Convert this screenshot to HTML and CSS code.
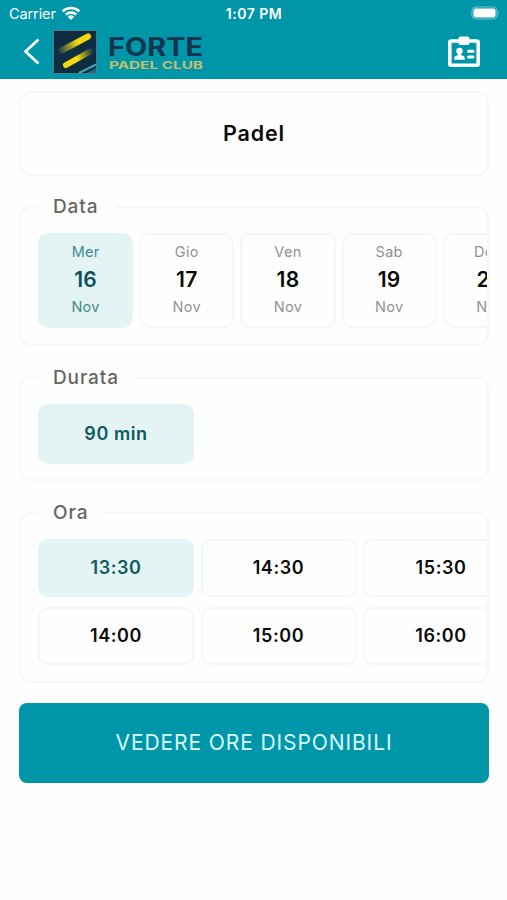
FILE: index.html
```html
<!DOCTYPE html>
<html lang="it">
<head>
    <meta charset="UTF-8">
    <meta name="viewport" content="width=device-width, initial-scale=1.0">
    <title>Forte Padel Club</title>
    <link rel="stylesheet" href="styles.css">
</head>
<body>
    <header class="header">
        <div class="status-bar">
            <div class="carrier">
                <span class="carrier-name">Carrier</span>
                <svg class="wifi" width="20" height="15" viewBox="0 0 20 15">
                    <path d="M1.7 5.4a12 12 0 0 1 16.6 0M4.8 8.7a7.5 7.5 0 0 1 10.4 0" fill="none" stroke="#fff" stroke-width="2.5"/>
                    <path d="M6.8 10.7a4.7 4.7 0 0 1 6.4 0L10 14z" fill="#fff"/>
                </svg>
            </div>
            <div class="time">1:07 PM</div>
            <svg class="battery" width="31" height="15" viewBox="0 0 31 15">
                <rect x="2" y="1" width="25" height="12" rx="4" fill="none" stroke="#6fc3cc" stroke-width="1.2"/>
                <rect x="3.5" y="2.5" width="22" height="9" rx="2" fill="#fff"/>
                <path d="M28.5 5q1.8 2 0 4z" fill="#6fc3cc"/>
            </svg>
        </div>
        <div class="nav-bar">
            <svg class="back" width="18" height="28" viewBox="0 0 18 28">
                <path d="M16.5 1.5L3.5 13.5l13 12" fill="none" stroke="#fff" stroke-width="2.7"/>
            </svg>
            <svg class="logo" width="44" height="44" viewBox="0 0 44 44">
                <defs>
                    <linearGradient id="stripeTop" gradientUnits="userSpaceOnUse" x1="5" y1="22" x2="24" y2="12">
                        <stop offset="0" stop-color="#12324a"/>
                        <stop offset="1" stop-color="#f5d90f"/>
                    </linearGradient>
                    <linearGradient id="stripeBottom" gradientUnits="userSpaceOnUse" x1="40" y1="20" x2="24" y2="28">
                        <stop offset="0" stop-color="#12324a"/>
                        <stop offset="1" stop-color="#f5d90f"/>
                    </linearGradient>
                </defs>
                <rect x=".5" y=".5" width="43" height="43" fill="#0e2d43" stroke="#4b7d8b"/>
                <path d="M6 22L35 6.5" stroke="url(#stripeTop)" stroke-width="6" stroke-linecap="round"/>
                <path d="M13 35L39 20.5" stroke="url(#stripeBottom)" stroke-width="6" stroke-linecap="round"/>
                <path d="M26 43L43 34.5" stroke="#49a6b8" stroke-width="2"/>
                <path d="M34 43l9-5v5z" fill="#12708a"/>
            </svg>
            <div class="brand">
                <svg width="98" height="38" viewBox="0 0 98 38">
                    <text class="brand-name" x="1" y="22.5" textLength="95" lengthAdjust="spacingAndGlyphs">FORTE</text>
                    <text class="brand-sub" x="2" y="36" textLength="94" lengthAdjust="spacingAndGlyphs">PADEL CLUB</text>
                </svg>
            </div>
            <svg class="badge" width="34" height="32" viewBox="0 0 34 32">
                <rect x="2.8" y="5" width="28.4" height="24.2" rx="1.5" fill="none" stroke="#fff" stroke-width="3.6"/>
                <rect x="11.5" y="0.5" width="11" height="8.5" rx="2" fill="#fff"/>
                <circle cx="12.5" cy="15" r="3.2" fill="#fff"/>
                <path d="M11 16h3v3l3 1.2q.8.5.8 3.5H7.2q0-3 .8-3.5l3-1.2z" fill="#fff"/>
                <path d="M21.5 15.2h4.5M21.5 21h4.5" stroke="#fff" stroke-width="3" stroke-linecap="round"/>
            </svg>
        </div>
    </header>

    <main class="container">
        <div class="sport">Padel</div>

        <fieldset class="group">
            <legend>Data</legend>
            <div class="scroller">
                <div class="days">
                    <div class="day selected"><span>Mer</span><b>16</b><span>Nov</span></div>
                    <div class="day"><span>Gio</span><b>17</b><span>Nov</span></div>
                    <div class="day"><span>Ven</span><b>18</b><span>Nov</span></div>
                    <div class="day"><span>Sab</span><b>19</b><span>Nov</span></div>
                    <div class="day"><span>Dom</span><b>20</b><span>Nov</span></div>
                </div>
            </div>
        </fieldset>

        <fieldset class="group group-duration">
            <legend>Durata</legend>
            <div class="slot duration selected">90 min</div>
        </fieldset>

        <fieldset class="group">
            <legend>Ora</legend>
            <div class="scroller">
                <div class="hours">
                    <div class="slot selected">13:30</div>
                    <div class="slot">14:30</div>
                    <div class="slot">15:30</div>
                    <div class="slot">14:00</div>
                    <div class="slot">15:00</div>
                    <div class="slot">16:00</div>
                </div>
            </div>
        </fieldset>

        <button class="submit">VEDERE ORE DISPONIBILI</button>
    </main>
</body>
</html>
```
FILE: styles.css
```css
* {
    box-sizing: border-box;
}
body {
    margin: 0;
    font-family: Inter, "Liberation Sans", sans-serif;
    background-color: #fefefe;
    color: #0b0b0b;
}
.header {
    height: 79px;
    background-color: #0096a9;
    color: white;
}
.status-bar {
    display: grid;
    grid-template-columns: 1fr auto 1fr;
    align-items: center;
    height: 27px;
    padding: 0 6px 0 9px;
    font-size: 14.5px;
}
.carrier {
    display: flex;
    align-items: center;
    gap: 5px;
}
.carrier-name {
    letter-spacing: -0.1px;
}
.time {
    padding-right: 2px;
    font-weight: 600;
    font-size: 14px;
    letter-spacing: 0.5px;
}
.battery {
    justify-self: end;
}
.nav-bar {
    display: flex;
    align-items: center;
    height: 50px;
    padding: 0 26px 0 22px;
}
.logo {
    margin-left: 13px;
}
.brand {
    height: 38px;
    margin-left: 10px;
}
.brand-name {
    font-size: 25px;
    font-weight: 700;
    fill: #12364d;
}
.brand-sub {
    font-size: 11px;
    font-weight: 700;
    fill: #c3bd6c;
}
.badge {
    margin-left: auto;
}
.container {
    padding: 12px 18px 0 19px;
}
.sport {
    height: 85px;
    margin-bottom: 19px;
    border: 2px solid #f6f7f7;
    border-radius: 12px;
    font-size: 21.5px;
    font-weight: 600;
    line-height: 81px;
    letter-spacing: 0.8px;
    text-align: center;
}
.group {
    min-width: 0;
    margin: 0 0 20px;
    padding: 14px 0 16px 17px;
    border: 2px solid #f6f7f7;
    border-radius: 12px;
}
.group-duration {
    padding-bottom: 15px;
}
legend {
    height: 24px;
    padding: 0 17px 0 15px;
    font-size: 19px;
    font-weight: 500;
    line-height: 24px;
    letter-spacing: 0.9px;
    color: #666;
}
.scroller {
    overflow: hidden;
}
.days {
    display: flex;
    gap: 6px;
}
.day {
    display: flex;
    flex: 0 0 95.2px;
    flex-direction: column;
    align-items: center;
    height: 95px;
    padding-top: 7px;
    border: 2px solid #f5f6f6;
    border-radius: 10px;
    font-size: 14.5px;
    line-height: 20px;
    letter-spacing: 0.3px;
    color: #929292;
}
.day b {
    margin: 6px 0 5px;
    font-size: 21px;
    font-weight: 600;
    line-height: 24px;
    color: #0b0b0b;
}
.hours {
    display: grid;
    grid-template-columns: repeat(3, 156px);
    gap: 10px 6.5px;
}
.slot {
    height: 58px;
    border: 2px solid #f5f6f6;
    border-radius: 10px;
    font-size: 18px;
    font-weight: 600;
    line-height: 53px;
    letter-spacing: 0.6px;
    text-align: center;
}
.duration {
    width: 156px;
    height: 60px;
    line-height: 56px;
}
.selected {
    border-color: #e4f4f5;
    background-color: #e4f4f5;
    color: #0d5a60;
}
.day.selected {
    color: #43898a;
}
.day.selected b {
    color: #0b5055;
}
.submit {
    display: block;
    width: 100%;
    height: 80px;
    padding-bottom: 3px;
    border: none;
    border-radius: 8px;
    background-color: #0096a9;
    font-family: inherit;
    font-size: 21px;
    letter-spacing: 0.9px;
    color: #d9fbff;
}
```
